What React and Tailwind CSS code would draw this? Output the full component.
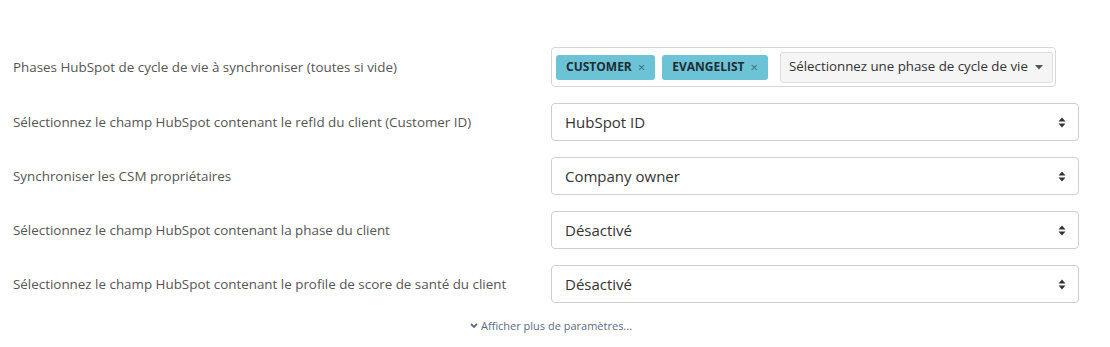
import { Fragment, useState } from "react";

const font = { fontFamily: '"Open Sans", "Noto Sans", sans-serif' };

function SortIcon() {
	return (
		<svg width="8" height="11" viewBox="0 0 8 11" className="text-[#333]">
			<path d="M4 0.5L7.5 4.5H0.5Z" fill="currentColor" />
			<path d="M4 10.5L0.5 6.5H7.5Z" fill="currentColor" />
		</svg>
	);
}

function SelectField({ value }) {
	return (
		<div className="flex h-[38px] w-full items-center justify-between rounded-[4px] border border-[#ccd0d6] bg-white pl-[13px] pr-[12px] text-[15px] text-[#333]">
			<span>{value}</span>
			<SortIcon />
		</div>
	);
}

function Tag({ label }) {
	return (
		<span className="flex h-[25px] shrink-0 items-center gap-[6px] whitespace-nowrap rounded-[3px] bg-[#6cc3d5] pl-[10px] pr-[10px] text-[12px] font-bold text-[#1f2d33]">
			{label}
			<span className="text-[13px] font-normal leading-none text-[#3f6f7a]">×</span>
		</span>
	);
}

export default function App() {
	const [phases] = useState(["CUSTOMER", "EVANGELIST"]);

	const rows = [
		{ label: "Sélectionnez le champ HubSpot contenant le refId du client (Customer ID)", value: "HubSpot ID" },
		{ label: "Synchroniser les CSM propriétaires", value: "Company owner" },
		{ label: "Sélectionnez le champ HubSpot contenant la phase du client", value: "Désactivé" },
		{ label: "Sélectionnez le champ HubSpot contenant le profile de score de santé du client", value: "Désactivé" },
	];

	return (
		<div className="h-[347px] w-[1110px] bg-white pt-[47px]" style={font}>
			<div className="grid grid-cols-[538px_528px] gap-y-4 pl-[13px]">
				<div className="flex items-center text-[13.4px] text-[#555]">
					Phases HubSpot de cycle de vie à synchroniser (toutes si vide)
				</div>
				<div className="flex h-[40px] w-[505px] items-center gap-[7px] rounded-[4px] border border-[#d3d6da] bg-white pl-[4px]">
					{phases.map((p) => (
						<Tag key={p} label={p} />
					))}
					<div className="ml-[5px] flex h-[31px] shrink-0 items-center gap-[7px] whitespace-nowrap rounded-[3px] border border-[#dcdcdc] bg-[#f5f5f5] pl-[8px] pr-[9px] text-[13.3px] text-[#333]">
						Sélectionnez une phase de cycle de vie
						<svg width="8" height="5" viewBox="0 0 8 5">
							<path d="M0 0H8L4 4.5Z" fill="#555" />
						</svg>
					</div>
				</div>

				{rows.map((r) => (
					<Fragment key={r.label}>
						<div className="flex items-center text-[13.4px] text-[#555]">{r.label}</div>
						<SelectField value={r.value} />
					</Fragment>
				))}
			</div>

			<div className="mt-[15px] flex items-center justify-center gap-[3px] pr-[8px] text-[11px] text-[#5b6b8c]">
				<svg width="8" height="6" viewBox="0 0 8 6">
					<path d="M1 1L4 4L7 1" stroke="#5b6b8c" strokeWidth="1.8" fill="none" />
				</svg>
				Afficher plus de paramètres...
			</div>
		</div>
	);
}
